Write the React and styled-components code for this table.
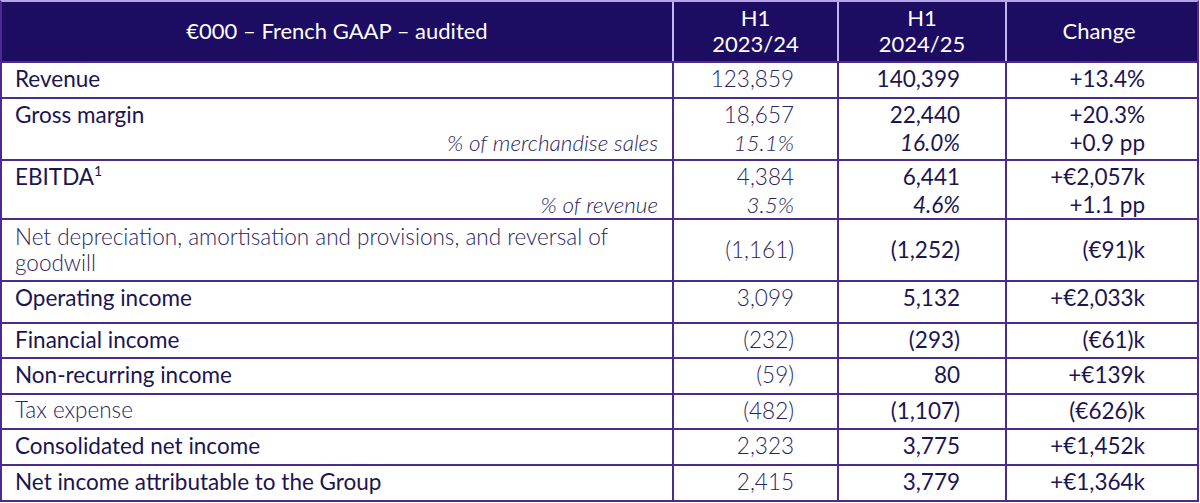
import React from 'react';
import styled, { createGlobalStyle } from 'styled-components';

const GlobalStyle = createGlobalStyle`
    html, body {
        margin: 0;
        padding: 0;
        background: #ffffff;
    }
    body {
        font-family: Lato, "Open Sans", sans-serif;
        color: #1c1550;
    }
`;

const COLUMNS = '672px 165px 168px 184px';
const LINE = '#4b2b8f';

const Table = styled.div`
    width: 1199px;
    box-sizing: border-box;
    border-left: 2px solid ${LINE};
    border-right: 2px solid ${LINE};
    border-top: 2px solid #b7a5e6;
`;

const Row = styled.div`
    display: grid;
    grid-template-columns: ${COLUMNS};
    height: ${({ h }) => h}px;
    border-bottom: 2px solid ${LINE};
    background: ${({ head }) => (head ? '#1c0d63' : '#ffffff')};
`;

const Cell = styled.div`
    display: flex;
    flex-direction: column;
    justify-content: ${({ middle }) => (middle ? 'center' : 'flex-start')};
    box-sizing: border-box;
    padding: ${({ middle }) => (middle ? '0' : '2px')} ${({ pr }) => pr || 0}px 0 ${({ pl }) => pl || 0}px;
    border-right: 2px solid ${({ head }) => (head ? '#c4b5ee' : LINE)};
    font-size: 22.5px;
    line-height: 28px;
    &:last-child {
        border-right: none;
    }
`;

const HeadCell = styled(Cell)`
    justify-content: center;
    align-items: center;
    text-align: center;
    padding: 0 0 1px;
    color: #ffffff;
    font-size: 22px;
    line-height: 26.5px;
`;

const Line = styled.div`
    text-align: ${({ right }) => (right ? 'right' : 'left')};
    font-weight: ${({ light }) => (light ? 300 : 400)};
    font-style: ${({ italic }) => (italic ? 'italic' : 'normal')};
    color: ${({ light }) => (light ? '#2a2560' : 'inherit')};
    white-space: nowrap;
`;

const Label = styled.div`
    font-weight: ${({ light }) => (light ? 300 : 400)};
    color: ${({ light }) => (light ? '#2a2560' : 'inherit')};
    line-height: ${({ light }) => (light ? 26 : 28)}px;
    padding-right: 24px;
`;

const SubLabel = styled(Line)`
    padding-right: 14px;
`;

const Sup = styled.sup`
    font-size: 14px;
    line-height: 0;
    vertical-align: 9px;
`;

const rows = [
    { label: 'Revenue', h: 34, a: ['123,859'], b: ['140,399'], c: ['+13.4%'] },
    {
        label: 'Gross margin', h: 60, sub: '% of merchandise sales',
        a: ['18,657', '15.1%'], b: ['22,440', '16.0%'], c: ['+20.3%', '+0.9 pp'],
    },
    {
        label: <>EBITDA<Sup>1</Sup></>, h: 57, sub: '% of revenue',
        a: ['4,384', '3.5%'], b: ['6,441', '4.6%'], c: ['+€2,057k', '+1.1 pp'],
    },
    {
        label: 'Net depreciation, amortisation and provisions, and reversal of goodwill',
        h: 60, light: true, middle: true, a: ['(1,161)'], b: ['(1,252)'], c: ['(€91)k'],
    },
    { label: 'Operating income', h: 40, a: ['3,099'], b: ['5,132'], c: ['+€2,033k'] },
    { label: 'Financial income', h: 33, a: ['(232)'], b: ['(293)'], c: ['(€61)k'] },
    { label: 'Non-recurring income', h: 34, a: ['(59)'], b: ['80'], c: ['+€139k'] },
    { label: 'Tax expense', h: 33, light: true, a: ['(482)'], b: ['(1,107)'], c: ['(€626)k'] },
    { label: 'Consolidated net income', h: 34, a: ['2,323'], b: ['3,775'], c: ['+€1,452k'] },
    { label: 'Net income attributable to the Group', h: 34, a: ['2,415'], b: ['3,779'], c: ['+€1,364k'] },
];

const ValueCell = ({ values, pr, light, middle, italicSecond }) => (
    <Cell pr={pr} middle={middle}>
        {values.map((v, i) => (
            <Line key={i} right light={light} italic={i === 1 && italicSecond}>
                {v}
            </Line>
        ))}
    </Cell>
);

const App = () => (
    <>
        <GlobalStyle />
        <Table>
            <Row head h={59}>
                <HeadCell head>€000 – French GAAP – audited</HeadCell>
                <HeadCell head>
                    <div>H1</div>
                    <div>2023/24</div>
                </HeadCell>
                <HeadCell head>
                    <div>H1</div>
                    <div>2024/25</div>
                </HeadCell>
                <HeadCell head>Change</HeadCell>
            </Row>
            {rows.map((r, i) => (
                <Row key={i} h={r.h}>
                    <Cell pl={13} middle={r.middle}>
                        <Label light={r.light}>{r.label}</Label>
                        {r.sub && (
                            <SubLabel right light italic>
                                {r.sub}
                            </SubLabel>
                        )}
                    </Cell>
                    <ValueCell values={r.a} pr={43} light middle={r.middle} italicSecond />
                    <ValueCell values={r.b} pr={45} middle={r.middle} italicSecond />
                    <ValueCell values={r.c} pr={46} middle={r.middle} />
                </Row>
            ))}
        </Table>
    </>
);

export default App;
